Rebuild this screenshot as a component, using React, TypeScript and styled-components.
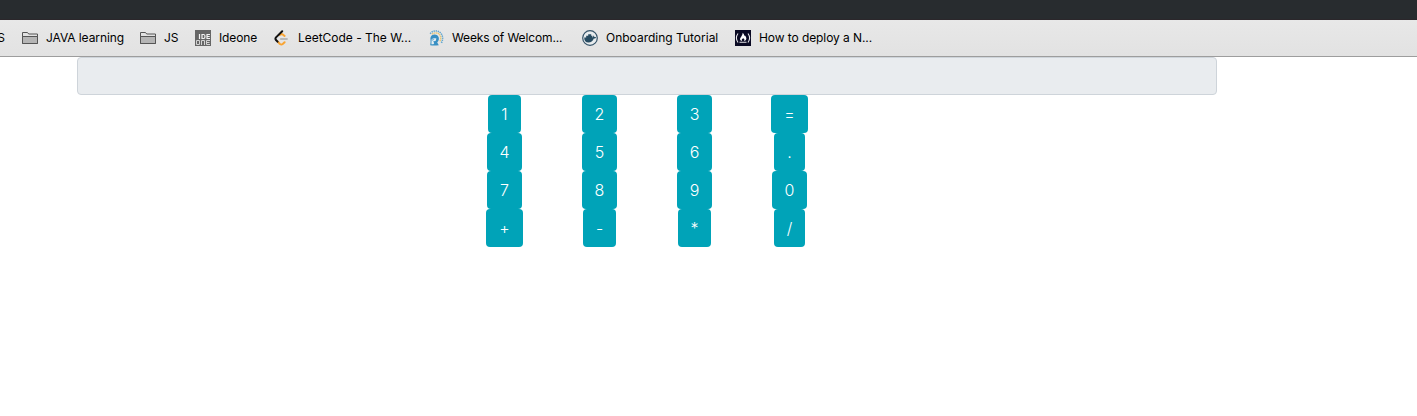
import React from "react";
import styled, { createGlobalStyle } from "styled-components";

const GlobalStyle = createGlobalStyle`
  *, *::before, *::after { box-sizing: border-box; }
  body { margin: 0; background: #fff; font-family: Inter, "Liberation Sans", sans-serif; overflow: hidden; }
`;

const TitleStrip = styled.div`
  height: 20px;
  background: #282c2f;
  border-bottom: 1px solid #2b272b;
`;

const BookmarksBar = styled.nav`
  display: flex;
  align-items: center;
  height: 37px;
  overflow: hidden;
  background: linear-gradient(#e8e8e8, #e2e2e2);
  border-bottom: 1px solid #9d9d9d;
`;

const Bookmark = styled.div<{ $gap: number }>`
  display: flex;
  flex: none;
  align-items: center;
  gap: 8px;
  margin-left: ${(p) => p.$gap}px;
`;

const Label = styled.span<{ $width: number; $tracking?: number }>`
  width: ${(p) => p.$width}px;
  font-size: 12px;
  line-height: 16px;
  letter-spacing: ${(p) => p.$tracking ?? 0}px;
  white-space: nowrap;
  color: #000;
`;

const ClippedLabel = styled(Label)`
  display: flex;
  justify-content: flex-end;
`;

const Icon = styled.svg`
  display: block;
  flex: none;
  width: 16px;
  height: 16px;
`;

const Container = styled.main`
  width: 1140px;
  margin-left: 77px;
`;

const Display = styled.input`
  display: block;
  width: 100%;
  height: 38px;
  padding: 6px 12px;
  border: 1px solid #ced4da;
  border-radius: 4px;
  background: #e9ecef;
  font: 16px/24px Inter, sans-serif;
  color: #495057;
`;

const Keypad = styled.div`
  display: grid;
  grid-template-columns: repeat(4, 95px);
  grid-auto-rows: 38px;
  justify-content: center;
  justify-items: center;
`;

const Key = styled.button<{ $width: number }>`
  width: ${(p) => p.$width}px;
  height: 38px;
  padding: 0;
  border: 0;
  border-radius: 4px;
  background: #00a3b8;
  color: #fff;
  font: 350 16px/24px Inter, "Liberation Sans", sans-serif;
  font-feature-settings: "calt" 0;
`;

const FolderIcon = () => (
  <Icon viewBox="0 0 16 16" fill="none" stroke="#555" strokeWidth="1">
    <path d="M.5 13.500V2.500h5l1.200 1.500h8.800v9.500z" fill="#e2e2e2" />
    <path d="M.5 6.500h15v7H.5z" fill="#b5b5b5" />
  </Icon>
);

const IdeoneIcon = () => (
  <Icon viewBox="0 0 16 16">
    <path d="M0 0h16v16H0z" fill="#666" />
    <g fill="none" stroke="#f2f2f2" strokeWidth="1.200">
      <path d="M4.500 4v5M7 4.500h1.800q1.200 0 1.200 2t-1.200 2H7zM15 4.500h-3v4h3M12 6.500h2.700" />
    </g>
    <g fill="none" stroke="#d2d2d2">
      <path d="M1.500 10.500h3v4h-3zM6.500 15v-4.500h3V15M15 10.500h-3.500v4H15M11.500 12.500h3" />
    </g>
  </Icon>
);

const LeetCodeIcon = () => (
  <Icon viewBox="0 0 16 16" fill="none" strokeLinecap="round" strokeLinejoin="round">
    <path d="M6.800 9h6.200" stroke="#b8b8b8" strokeWidth="1.800" />
    <path d="M5.800 4.900 7.500 4q1 0 3.100 1.900M3.700 11.500l2.200 2.500q1.500 1.100 2.800 0l1.900-1.800" stroke="#f9a432" strokeWidth="2" />
    <path d="M8.200 1.200 2 7.400q-1.100 1.300 0 2.600l1.500 1.700" stroke="#111" strokeWidth="2" />
  </Icon>
);

const SpartanIcon = () => (
  <Icon viewBox="0 0 16 16" fill="none">
    <path d="M2.200 3.700C5-.2 10.700 0 13.400 4c1.700 2.800 1.600 6-.2 9.300" stroke="#5ba3cd" strokeWidth="1.500" strokeDasharray="1.300 .8" />
    <path d="M4 4.300c3-2.500 6.800-1.700 8.300 1.400.8 2 .5 4-.5 6" stroke="#eac56f" strokeWidth="1.300" strokeDasharray="1.500 .5" />
    <path d="M2.400 8c.4-2.300 2.400-3.500 4.500-3.400 2.800.1 4.500 2.600 3.900 5.200-.3 1.200-1 2-1.600 2.800l1.600 2.600c-3 .4-5.800.5-8.600.1L2.600 12z" fill="#378fc3" />
    <path d="M3.600 9.300c1.500-1.300 3.200-1.400 4.800-.7L7.600 11l-2.400.2 1 2-.8 1.100-2-.1z" fill="#e5edf1" />
    <path d="m3.500 9.700 2.800-.5-.5.900-1.700.5z" fill="#378fc3" />
  </Icon>
);

const DockerIcon = () => (
  <Icon viewBox="0 0 16 16">
    <circle cx="8" cy="8" r="7.300" fill="#e8ecee" stroke="#365469" strokeWidth="1.200" />
    <path d="M2.200 7.400h2V5.800h2V4.300h3v1.500h1.200v1.600c.7 0 1-.5.800-1.800.9.400 1.100 1 1.100 1.500.6-.2 1.300 0 1.800.3-.5 1-1.400 1.200-2.300 1.200-1 2.800-2.800 4-5.300 4-2.800 0-4.400-2-4.300-5.200z" fill="#274b61" />
  </Icon>
);

const FreeCodeCampIcon = () => (
  <Icon viewBox="0 0 16 16">
    <path d="M0 0h16v16H0z" fill="#0a0a23" />
    <path d="M3 3.500q-3.200 4.500 0 9M13 3.500q3.200 4.500 0 9M4.500 12.300h7" fill="none" stroke="#e6e6ea" strokeWidth="1.100" />
    <path d="M7.600 2.800c1.800 1.200 1.200 2.500 2 3.300.3-.2.300-.5.200-.9 1.800 2 2.300 4 .3 5.500H9c.7-1 .4-1.800-.6-2.700.1 1-.4 1-.8.6-.8.700-1 1.300-.5 2.100H6c-3-2.100 2-4.500 1.600-7.900z" fill="#fff" />
  </Icon>
);

const bookmarks = [
  { icon: FolderIcon, text: "JAVA learning", gap: 17, width: 78, tracking: -0.08 },
  { icon: FolderIcon, text: "JS", gap: 16, width: 14, tracking: 0 },
  { icon: IdeoneIcon, text: "Ideone", gap: 17, width: 38, tracking: -0.1 },
  { icon: LeetCodeIcon, text: "LeetCode - The W...", gap: 17, width: 113, tracking: -0.02 },
  { icon: SpartanIcon, text: "Weeks of Welcom...", gap: 17, width: 110, tracking: -0.12 },
  { icon: DockerIcon, text: "Onboarding Tutorial", gap: 20, width: 112, tracking: 0 },
  { icon: FreeCodeCampIcon, text: "How to deploy a N...", gap: 17, width: 113, tracking: -0.08 },
];

const keys: [string, number][] = [
  ["1", 33], ["2", 35], ["3", 35], ["=", 37],
  ["4", 35], ["5", 35], ["6", 35], [".", 31],
  ["7", 35], ["8", 35], ["9", 35], ["0", 35],
  ["+", 37], ["-", 33], ["*", 33], ["/", 31],
];

export default function App() {
  return (
    <>
      <GlobalStyle />
      <TitleStrip />
      <BookmarksBar>
        <ClippedLabel $width={5}>S</ClippedLabel>
        {bookmarks.map(({ icon: Glyph, text, gap, width, tracking }) => (
          <Bookmark key={text} $gap={gap}>
            <Glyph />
            <Label $width={width} $tracking={tracking}>{text}</Label>
          </Bookmark>
        ))}
      </BookmarksBar>
      <Container>
        <Display readOnly aria-label="Result" />
        <Keypad>
          {keys.map(([symbol, width]) => (
            <Key key={symbol} $width={width}>{symbol}</Key>
          ))}
        </Keypad>
      </Container>
    </>
  );
}
